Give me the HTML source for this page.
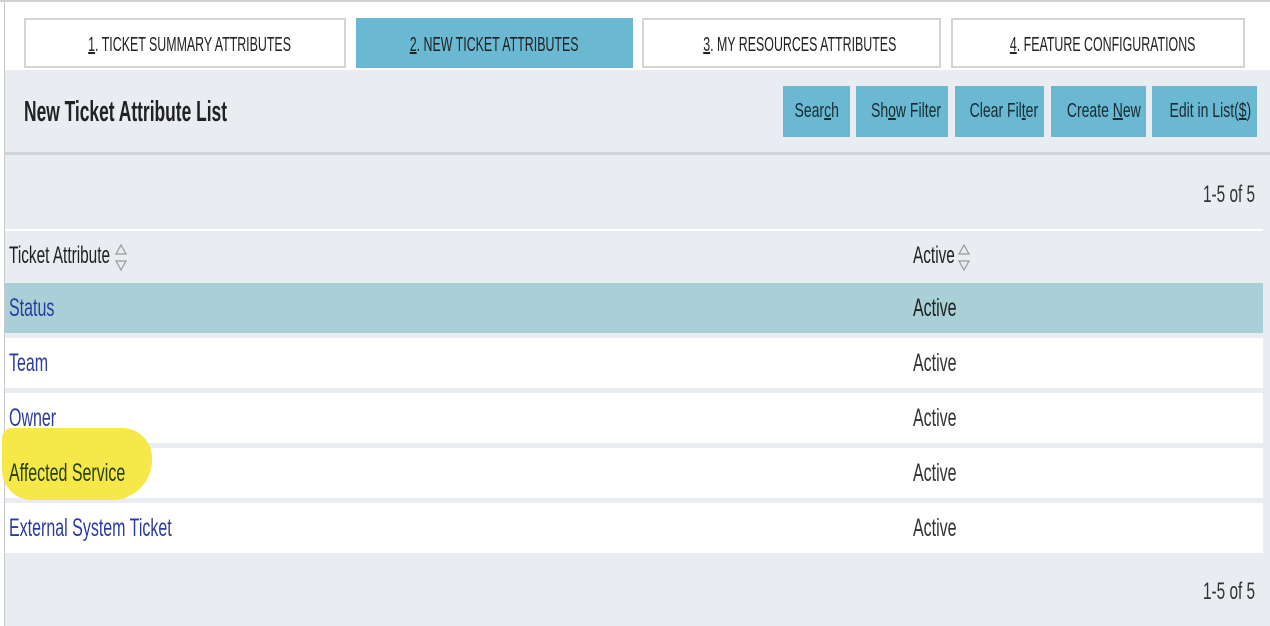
<!DOCTYPE html>
<html><head><style>
body{margin:0;width:1270px;height:626px;background:#fff;position:relative;overflow:hidden;font-family:"Liberation Sans",sans-serif;color:#222}
.a{position:absolute}
.c{display:inline-block;transform:scaleX(.64);transform-origin:left center;white-space:nowrap}
.tab{position:absolute;top:18px;height:50px;border:2px solid #d4d4d4;background:#fff;font-size:20px;line-height:50px;text-align:center;box-sizing:border-box}
.tab .c{transform-origin:center;transform:scaleX(.62)}
.btn{position:absolute;top:86px;height:51px;background:#6ab8d2;font-size:20px;line-height:51px;text-align:center;color:#1a2b33}
.btn .c{transform-origin:center;transform:scaleX(.7)}
.row{position:absolute;left:5px;width:1258px;height:50px;background:#fff;font-size:25px;line-height:50px}
.row .l{position:absolute;left:4px;color:#2a3c9c}
.row .r{position:absolute;left:908px;color:#333}
</style></head><body>
<div class="a" style="left:4px;top:0;width:1px;height:626px;background:#c8c8c8"></div>
<div class="a" style="left:0;top:0;width:1270px;height:2px;background:#d0d0d0"></div>
<div class="tab" style="left:24px;width:322px"><span class="c"><u>1</u>. TICKET SUMMARY ATTRIBUTES</span></div>
<div class="tab" style="left:356px;width:277px;background:#6ab8d2;border-color:#6ab8d2"><span class="c"><u>2</u>. NEW TICKET ATTRIBUTES</span></div>
<div class="tab" style="left:642px;width:299px"><span class="c"><u>3</u>. MY RESOURCES ATTRIBUTES</span></div>
<div class="tab" style="left:951px;width:294px"><span class="c"><u>4</u>. FEATURE CONFIGURATIONS</span></div>
<div class="a" style="left:5px;top:70px;width:1265px;height:83px;background:#e9ecf1"></div>
<div class="a" style="left:5px;top:152px;width:1265px;height:3px;background:#cfd3da"></div>
<div class="a" style="left:24px;top:92px;font-size:29px;font-weight:bold;line-height:40px"><span class="c" style="transform:scaleX(.6)">New Ticket Attribute List</span></div>
<div class="btn" style="left:783px;width:67px"><span class="c">Sear<u>c</u>h</span></div>
<div class="btn" style="left:856px;width:92px"><span class="c">Sh<u>o</u>w Filter</span></div>
<div class="btn" style="left:955px;width:89px"><span class="c">Clear Fil<u>t</u>er</span></div>
<div class="btn" style="left:1051px;width:95px"><span class="c">Create <u>N</u>ew</span></div>
<div class="btn" style="left:1152px;width:105px"><span class="c">Edit in List(<u>$</u>)</span></div>
<div class="a" style="left:5px;top:155px;width:1265px;height:471px;background:#e9ecf1"></div>
<div class="a" style="left:1203px;top:180px;font-size:24px;line-height:30px;color:#333"><span class="c">1-5 of 5</span></div>
<div class="a" style="left:5px;top:229px;width:1258px;height:2px;background:#fff"></div>
<div class="a" style="left:9px;top:241px;font-size:24px;line-height:30px"><span class="c">Ticket Attribute</span></div>
<div class="a" style="left:913px;top:241px;font-size:24px;line-height:30px"><span class="c">Active</span></div>
<svg class="a" style="left:114px;top:242px" width="14" height="32"><path d="M2 12 L7 3 L12 12 Z M2 19 L7 28 L12 19 Z" fill="none" stroke="#999" stroke-width="1.2"/></svg>
<svg class="a" style="left:957px;top:242px" width="14" height="32"><path d="M2 12 L7 3 L12 12 Z M2 19 L7 28 L12 19 Z" fill="none" stroke="#999" stroke-width="1.2"/></svg>
<div class="row" style="top:283px;background:#a8d0d6"><span class="l c">Status</span><span class="r c" style="color:#222">Active</span></div>
<div class="row" style="top:338px"><span class="l c">Team</span><span class="r c">Active</span></div>
<div class="row" style="top:393px"><span class="l c">Owner</span><span class="r c">Active</span></div>
<div class="row" style="top:448px"><span class="r c">Active</span></div>
<div class="a" style="left:2px;top:428px;width:150px;height:72px;background:#f7e84a;border-radius:10px 30px 40px 30px"></div>
<div class="a" style="left:9px;top:448px;font-size:25px;line-height:50px;color:#23400e"><span class="c">Affected Service</span></div>
<div class="row" style="top:503px"><span class="l c">External System Ticket</span><span class="r c">Active</span></div>
<div class="a" style="left:1203px;top:577px;font-size:24px;line-height:30px;color:#333"><span class="c">1-5 of 5</span></div>
</body></html>
